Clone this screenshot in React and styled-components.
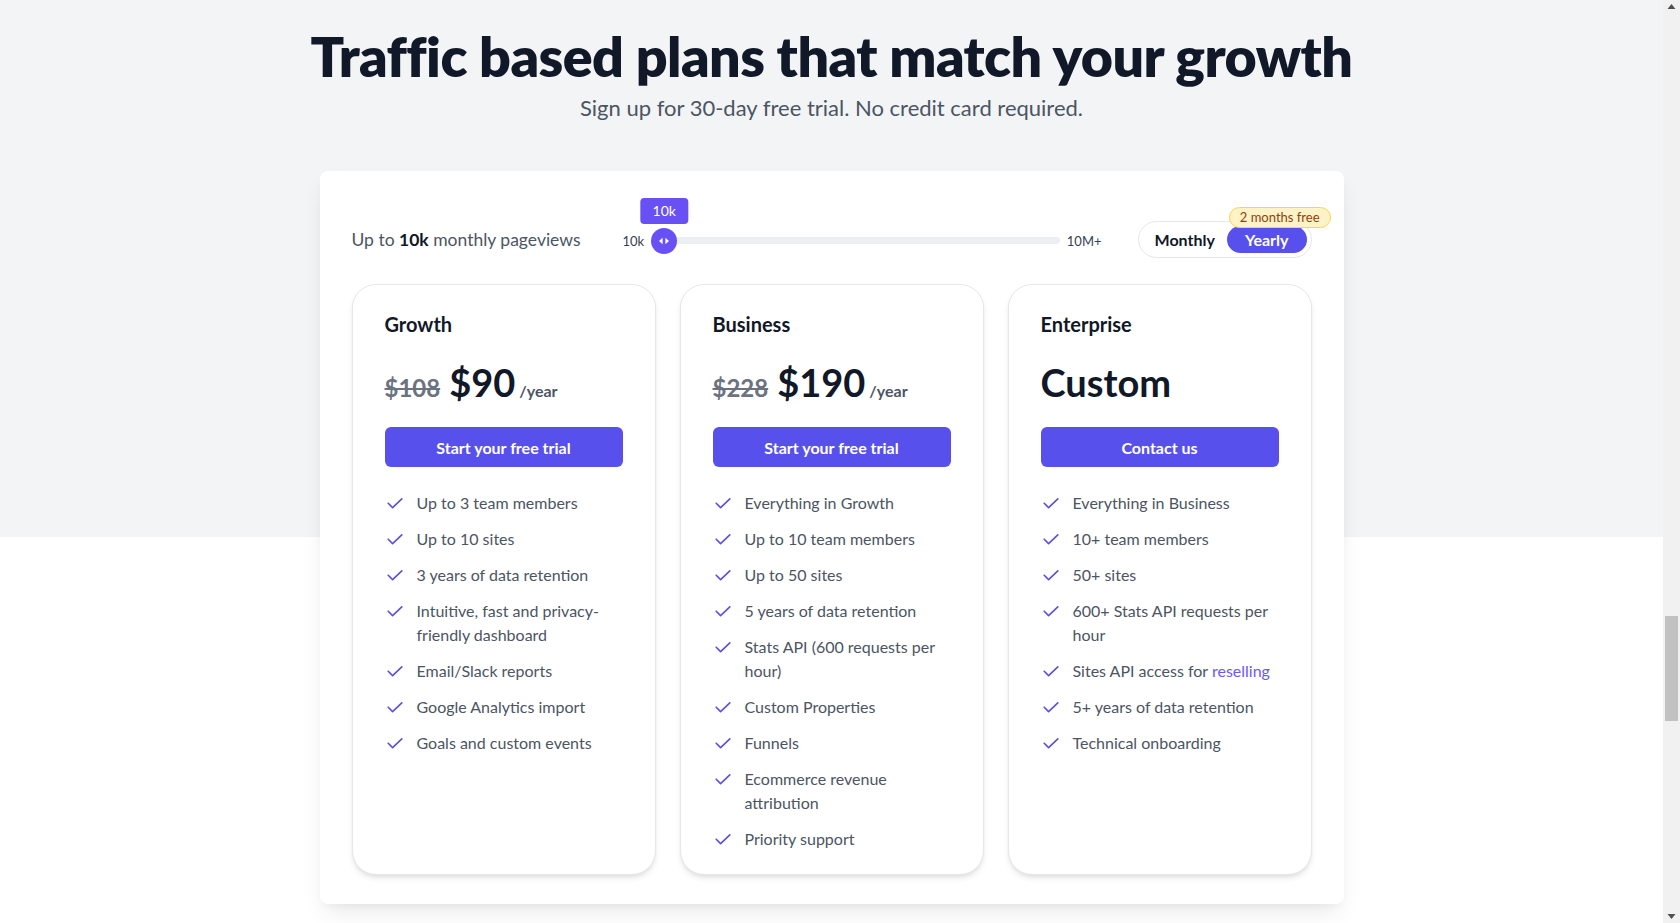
import React from "react";
import styled, { createGlobalStyle } from "styled-components";

const GlobalStyle = createGlobalStyle`
  * { box-sizing: border-box; }
  html, body { margin: 0; padding: 0; }
  body {
    font-family: Lato, "Open Sans", sans-serif;
    color: #111827;
    background: #ffffff;
  }
`;

const plans = [
  {
    name: "Growth",
    oldPrice: "$108",
    price: "$90",
    cta: "Start your free trial",
    features: [
      "Up to 3 team members",
      "Up to 10 sites",
      "3 years of data retention",
      "Intuitive, fast and privacy-friendly dashboard",
      "Email/Slack reports",
      "Google Analytics import",
      "Goals and custom events",
    ],
  },
  {
    name: "Business",
    oldPrice: "$228",
    price: "$190",
    cta: "Start your free trial",
    features: [
      "Everything in Growth",
      "Up to 10 team members",
      "Up to 50 sites",
      "5 years of data retention",
      "Stats API (600 requests per hour)",
      "Custom Properties",
      "Funnels",
      "Ecommerce revenue attribution",
      "Priority support",
    ],
  },
  {
    name: "Enterprise",
    custom: true,
    cta: "Contact us",
    features: [
      "Everything in Business",
      "10+ team members",
      "50+ sites",
      "600+ Stats API requests per hour",
      { text: "Sites API access for ", link: "reselling" },
      "5+ years of data retention",
      "Technical onboarding",
    ],
  },
];

const CheckIcon = () => (
  <CheckSvg viewBox="0 0 16 11" fill="none">
    <path
      d="M1.2 5.2 L5.6 9.6 L14.8 0.8"
      stroke="currentColor"
      strokeWidth="1.6"
      strokeLinecap="round"
      strokeLinejoin="round"
    />
  </CheckSvg>
);

const App = () => {
  return (
    <Page>
      <GlobalStyle />
      <Title>Traffic based plans that match your growth</Title>
      <Subtitle>Sign up for 30-day free trial. No credit card required.</Subtitle>

      <Panel>
        <TopRow>
          <Pageviews>
            Up to <strong>10k</strong> monthly pageviews
          </Pageviews>

          <SliderGroup>
            <SliderLabel>10k</SliderLabel>
            <Track>
              <Thumb>
                <Tooltip>10k</Tooltip>
                <svg width="10" height="8" viewBox="0 0 10 8">
                  <polygon points="0,4 3.6,0.8 3.6,7.2" fill="#fff" />
                  <polygon points="10,4 6.4,0.8 6.4,7.2" fill="#fff" />
                </svg>
              </Thumb>
            </Track>
            <SliderLabel>10M+</SliderLabel>
          </SliderGroup>

          <Toggle>
            <ToggleButton>Monthly</ToggleButton>
            <ToggleButton $active>Yearly</ToggleButton>
            <Badge>2 months free</Badge>
          </Toggle>
        </TopRow>

        <PlanGrid>
          {plans.map((plan) => (
            <Card key={plan.name}>
              <PlanName>{plan.name}</PlanName>
              <PriceRow>
                {plan.custom ? (
                  <Price>Custom</Price>
                ) : (
                  <>
                    <OldPrice>{plan.oldPrice}</OldPrice>
                    <Price>{plan.price}</Price>
                    <Period>/year</Period>
                  </>
                )}
              </PriceRow>
              <CtaButton>{plan.cta}</CtaButton>
              <FeatureList>
                {plan.features.map((f, i) => (
                  <Feature key={i}>
                    <CheckIcon />
                    {typeof f === "string" ? (
                      <span>{f}</span>
                    ) : (
                      <span>
                        {f.text}
                        <Link href="#">{f.link}</Link>
                      </span>
                    )}
                  </Feature>
                ))}
              </FeatureList>
            </Card>
          ))}
        </PlanGrid>
      </Panel>

      <ScrollRail>
        <svg width="17" height="14" viewBox="0 0 17 14">
          <polygon points="8.5,4 12.5,9 4.5,9" fill="#505050" />
        </svg>
        <ScrollThumb />
        <svg width="17" height="14" viewBox="0 0 17 14">
          <polygon points="4.5,5 12.5,5 8.5,10" fill="#505050" />
        </svg>
      </ScrollRail>
    </Page>
  );
};

export default App;

const Page = styled.main`
  background: linear-gradient(#f3f4f6 0, #f3f4f6 537px, #ffffff 537px);
  padding: 26px 17px 40px 0;
`;

const Title = styled.h1`
  margin: 0;
  text-align: center;
  font-size: 55.5px;
  line-height: 60px;
  font-weight: 800;
  letter-spacing: -0.01em;
  color: #111827;
`;

const Subtitle = styled.p`
  margin: 8px 0 0;
  text-align: center;
  font-size: 22px;
  line-height: 28px;
  color: #4b5563;
`;

const Panel = styled.section`
  width: 1024px;
  margin: 49px auto 0;
  background: #ffffff;
  border-radius: 8px;
  padding: 50px 32px 29px;
  box-shadow: 0 12px 24px -6px rgba(0, 0, 0, 0.1), 0 4px 10px -4px rgba(0, 0, 0, 0.06);
`;

const TopRow = styled.div`
  display: flex;
  align-items: center;
  height: 37px;
`;

const Pageviews = styled.div`
  font-size: 17.5px;
  color: #4b5563;
  white-space: nowrap;

  strong {
    color: #111827;
    font-weight: 700;
  }
`;

const SliderGroup = styled.div`
  flex: 1;
  display: flex;
  align-items: center;
  gap: 7px;
  margin: 2px 36px 0 42px;
`;

const SliderLabel = styled.span`
  font-size: 13px;
  color: #374151;
`;

const Track = styled.div`
  position: relative;
  flex: 1;
  height: 7px;
  border-radius: 4px;
  background: #eceef2;
`;

const Thumb = styled.div`
  position: absolute;
  left: 0;
  top: 50%;
  transform: translateY(-50%);
  width: 26px;
  height: 26px;
  border-radius: 50%;
  background: #6950f5;
  display: flex;
  align-items: center;
  justify-content: center;
`;

const Tooltip = styled.div`
  position: absolute;
  bottom: calc(100% + 4px);
  left: 50%;
  transform: translateX(-50%);
  height: 26px;
  padding: 0 12px;
  border-radius: 4px;
  background: #6950f5;
  color: #ffffff;
  font-size: 14px;
  line-height: 26px;
  white-space: nowrap;
`;

const Toggle = styled.div`
  position: relative;
  display: flex;
  align-items: center;
  height: 37px;
  padding: 4px;
  border: 1px solid #e5e7eb;
  border-radius: 9999px;
  background: #ffffff;
`;

const ToggleButton = styled.button`
  height: 27px;
  padding: 0 ${(p) => (p.$active ? "18px" : "12px")};
  border: none;
  border-radius: 9999px;
  background: ${(p) => (p.$active ? "#5850ec" : "transparent")};
  color: ${(p) => (p.$active ? "#ffffff" : "#111827")};
  font-family: inherit;
  font-size: 16px;
  font-weight: 700;
  cursor: pointer;
`;

const Badge = styled.span`
  position: absolute;
  top: -15px;
  right: -20px;
  height: 21px;
  padding: 0 10px;
  border: 1px solid #fcd34d;
  border-radius: 9999px;
  background: #fef3c7;
  color: #92400e;
  font-size: 13px;
  line-height: 19px;
  white-space: nowrap;
`;

const PlanGrid = styled.div`
  display: grid;
  grid-template-columns: repeat(3, 1fr);
  gap: 24px;
  margin-top: 26px;
`;

const Card = styled.div`
  display: flex;
  flex-direction: column;
  padding: 25px 32px 23px;
  background: #ffffff;
  border: 1px solid #e5e7eb;
  border-radius: 24px;
  box-shadow: 0 4px 6px -1px rgba(0, 0, 0, 0.1), 0 2px 4px -2px rgba(0, 0, 0, 0.08);
`;

const PlanName = styled.h3`
  margin: 0;
  font-size: 20px;
  line-height: 28px;
  font-weight: 700;
  color: #111827;
`;

const PriceRow = styled.div`
  display: flex;
  align-items: baseline;
  height: 40px;
  margin-top: 24px;
  line-height: 40px;
`;

const OldPrice = styled.span`
  margin-right: 9px;
  font-size: 24px;
  font-weight: 700;
  color: #6b7280;
  text-decoration: line-through;
`;

const Price = styled.span`
  font-size: 38px;
  font-weight: 700;
  color: #111827;
`;

const Period = styled.span`
  margin-left: 4px;
  font-size: 16px;
  font-weight: 700;
  color: #4b5563;
`;

const CtaButton = styled.button`
  width: 100%;
  height: 40px;
  margin-top: 25px;
  border: none;
  border-radius: 6px;
  background: #5850ec;
  color: #ffffff;
  font-family: inherit;
  font-size: 16px;
  font-weight: 700;
  cursor: pointer;
`;

const FeatureList = styled.ul`
  list-style: none;
  margin: 24px 0 0;
  padding: 0;
  display: flex;
  flex-direction: column;
  gap: 12px;
`;

const Feature = styled.li`
  display: flex;
  gap: 14px;
  font-size: 16px;
  line-height: 24px;
  color: #4b5563;
`;

const CheckSvg = styled.svg`
  flex-shrink: 0;
  width: 16px;
  height: 11px;
  margin: 7px 0 0 2px;
  color: #5a4fe6;
`;

const Link = styled.a`
  color: #6a5af9;
  text-decoration: none;
`;

const ScrollRail = styled.div`
  position: fixed;
  top: 0;
  right: 0;
  width: 17px;
  height: 100vh;
  background: #f1f1f1;
  display: flex;
  flex-direction: column;
  justify-content: space-between;
`;

const ScrollThumb = styled.div`
  position: absolute;
  top: 616px;
  left: 2px;
  width: 13px;
  height: 105px;
  background: #c1c1c1;
`;
